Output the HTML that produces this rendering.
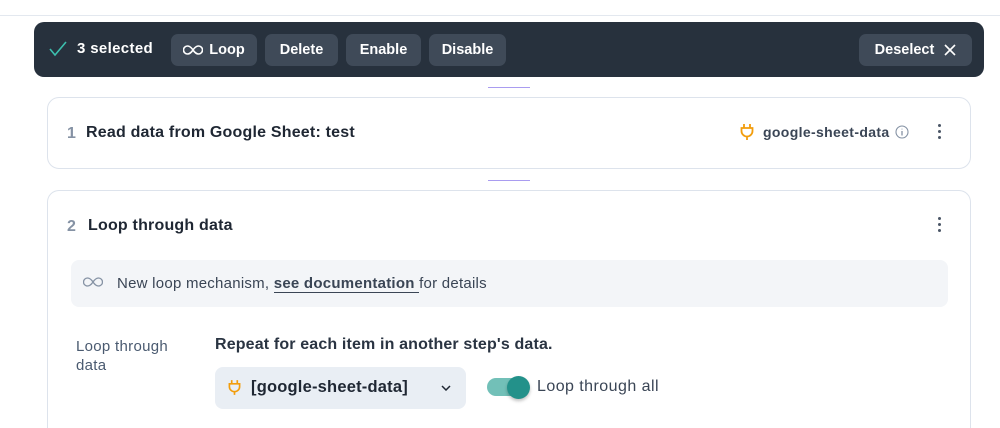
<!DOCTYPE html>
<html><head><style>
*{box-sizing:border-box;margin:0;padding:0}
html,body{width:1000px;height:428px;overflow:hidden}
body{background:#fff;font-family:"Liberation Sans",sans-serif;color:#1f2733;position:relative}
.a{position:absolute;white-space:nowrap}
.tb{left:34px;top:22px;width:950px;height:55px;background:#27313d;border-radius:10px}
.btn{position:absolute;top:12px;height:32px;background:#3f4a58;border-radius:7px;color:#fff;font-size:14.5px;font-weight:bold;display:flex;align-items:center;justify-content:center;gap:6px}
.card{left:47px;width:924px;border:1px solid #dde3ec;border-radius:12px;background:#fff}
.conn{left:488px;width:42px;height:1px;background:#a99cf0}
.dots{position:absolute;width:3px}
.dots i{display:block;width:3px;height:3px;border-radius:50%;background:#4a5566;margin-bottom:3px}
</style></head><body>
<div class="a" style="left:0;top:15px;width:1000px;height:1px;background:#e3e8ef"></div>
<div class="a tb">
 <svg class="a" style="left:15px;top:19px" width="18" height="16" viewBox="0 0 18 16"><path d="M1 8l5 6L17 1" fill="none" stroke="#3cbfae" stroke-width="1.6"/></svg>
 <div class="a" style="left:43px;top:18px;color:#fff;font-size:15px;font-weight:bold;letter-spacing:.35px">3 selected</div>
 <div class="btn" style="left:137px;width:86px"><svg width="20" height="10" viewBox="0 0 20 10"><path d="M10 5C8 2 6 1 4.5 1a4 4 0 000 8C6 9 8 8 10 5s4-4 5.5-4a4 4 0 010 8C14 9 12 8 10 5z" fill="none" stroke="#fff" stroke-width="1.6"/></svg>Loop</div>
 <div class="btn" style="left:231px;width:73px">Delete</div>
 <div class="btn" style="left:312px;width:75px">Enable</div>
 <div class="btn" style="left:395px;width:77px">Disable</div>
 <div class="btn" style="left:825px;width:113px;gap:10px">Deselect<svg width="12" height="12" viewBox="0 0 12 12"><path d="M1 1l10 10M11 1L1 11" stroke="#fff" stroke-width="1.6"/></svg></div>
</div>
<div class="a conn" style="top:87px"></div>
<div class="a card" style="top:97px;height:72px">
 <div class="a" style="left:19px;top:27px;font-size:16px;color:#8592a4;font-weight:bold">1</div>
 <div class="a" style="left:38px;top:26px;font-size:16px;font-weight:bold;color:#1f2733;letter-spacing:.2px">Read data from Google Sheet: test</div>
 <svg class="a" style="left:692px;top:25px" width="14" height="18" viewBox="0 0 14 18"><path d="M4 1v4M10 1v4M1.5 5h11v3a5.5 5.5 0 01-11 0zM7 13.5V17" fill="none" stroke="#f29d0c" stroke-width="1.8"/></svg>
 <div class="a" style="left:715px;top:26px;font-size:14px;font-weight:bold;color:#3a4555;letter-spacing:.35px">google-sheet-data</div>
 <svg class="a" style="left:847px;top:27px" width="14" height="14" viewBox="0 0 14 14"><circle cx="7" cy="7" r="6" fill="none" stroke="#8592a4" stroke-width="1.1"/><path d="M7 6v4.5M7 3.8v.6" stroke="#8592a4" stroke-width="1.3"/></svg>
 <div class="dots" style="left:890px;top:26px"><i></i><i></i><i></i></div>
</div>
<div class="a conn" style="top:180px"></div>
<div class="a card" style="top:190px;height:238px;border-bottom:none;border-radius:12px 12px 0 0">
 <div class="a" style="left:19px;top:27px;font-size:16px;color:#8592a4;font-weight:bold">2</div>
 <div class="a" style="left:40px;top:26px;font-size:16px;font-weight:bold;color:#1f2733;letter-spacing:.2px">Loop through data</div>
 <div class="dots" style="left:890px;top:26px"><i></i><i></i><i></i></div>
 <div class="a" style="left:23px;top:69px;width:877px;height:47px;background:#f3f5f8;border-radius:8px">
  <svg class="a" style="left:12px;top:17px" width="20" height="10" viewBox="0 0 20 10"><path d="M10 5C8 2 6 1 4.5 1a4 4 0 000 8C6 9 8 8 10 5s4-4 5.5-4a4 4 0 010 8C14 9 12 8 10 5z" fill="none" stroke="#8592a4" stroke-width="1.3"/></svg>
  <div class="a" style="left:46px;top:15px;font-size:15px;color:#3a4555;letter-spacing:.25px">New loop mechanism, <b style="border-bottom:1px solid #3a4555">see documentation </b>for details</div>
 </div>
 <div class="a" style="left:28px;top:146px;font-size:15px;color:#4a5a70;line-height:19px;letter-spacing:.3px">Loop through<br>data</div>
 <div class="a" style="left:167px;top:145px;font-size:16px;font-weight:bold;color:#2a3442;letter-spacing:.15px">Repeat for each item in another step's data.</div>
 <div class="a" style="left:167px;top:176px;width:251px;height:42px;background:#e9eef4;border-radius:8px">
  <svg class="a" style="left:13px;top:12px" width="13" height="17" viewBox="0 0 14 18"><path d="M4 1v4M10 1v4M1.5 5h11v3a5.5 5.5 0 01-11 0zM7 13.5V17" fill="none" stroke="#f29d0c" stroke-width="1.8"/></svg>
  <div class="a" style="left:36px;top:11px;font-size:16.5px;font-weight:bold;color:#1f2733;letter-spacing:.2px">[google-sheet-data]</div>
  <svg class="a" style="left:226px;top:18px" width="10" height="6" viewBox="0 0 10 6"><path d="M1 1l4 4 4-4" fill="none" stroke="#1f2733" stroke-width="1.5"/></svg>
 </div>
 <div class="a" style="left:439px;top:187px;width:40px;height:18px;border-radius:9px;background:#72c0b8"></div>
 <div class="a" style="left:459px;top:185px;width:23px;height:23px;border-radius:50%;background:#23918a;box-shadow:0 2px 3px rgba(0,0,0,.25)"></div>
 <div class="a" style="left:489px;top:187px;font-size:16px;color:#3a4555;letter-spacing:.45px">Loop through all</div>
</div>
</body></html>
